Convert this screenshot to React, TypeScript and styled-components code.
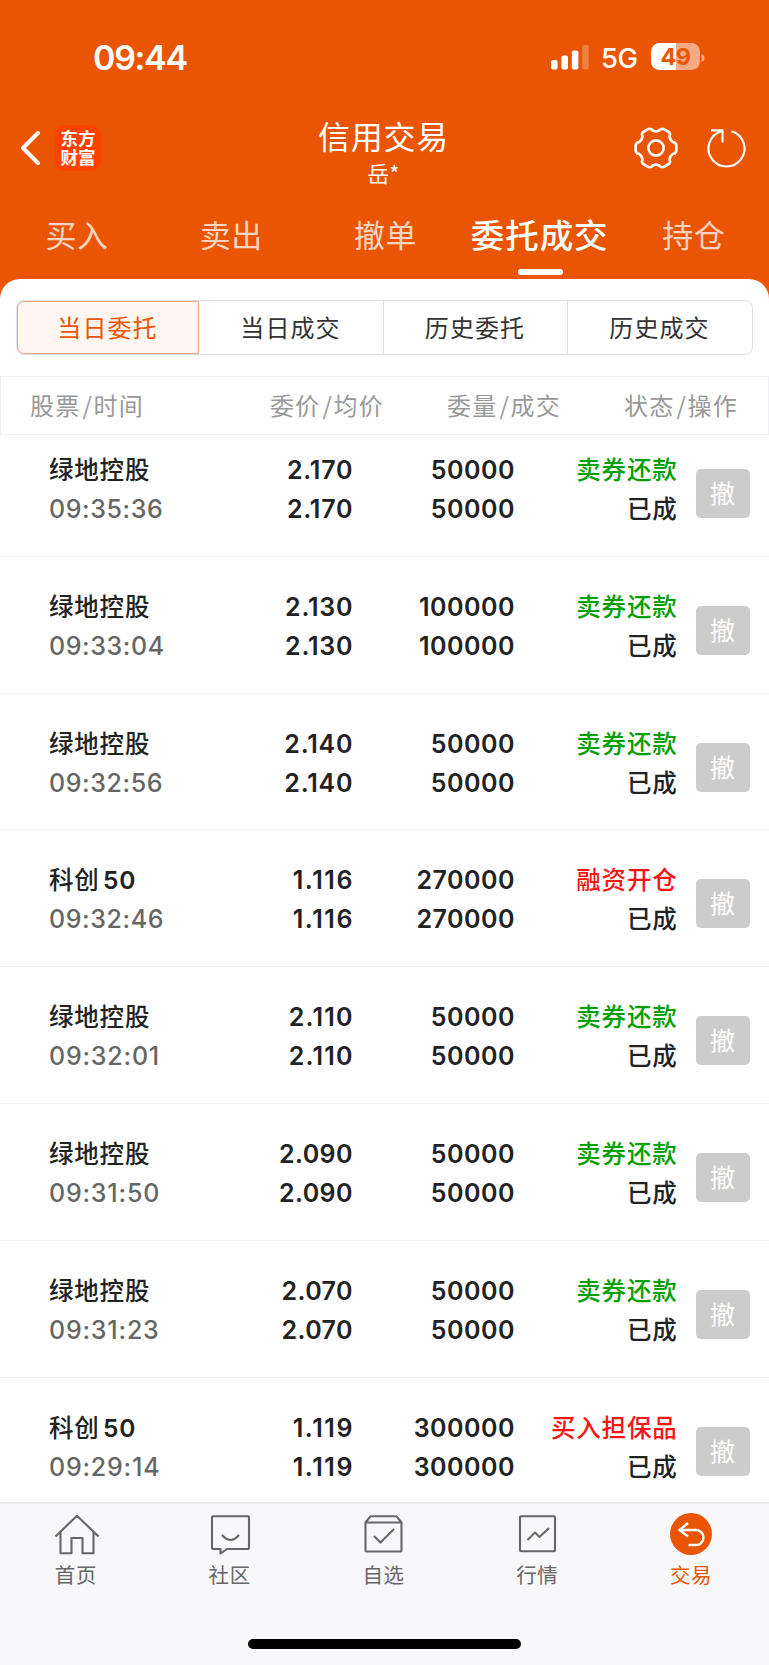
import React from "react";
import styled, { createGlobalStyle } from "styled-components";

const ORANGE = "#ea5504";
const FONT = `Inter, "Noto Sans CJK SC", sans-serif`;
const CJK = `"Noto Sans CJK SC", sans-serif`;

const Global = createGlobalStyle`
  * { box-sizing: border-box; }
  body { margin: 0; background: #fff; font-family: ${FONT}; }
`;

const Screen = styled.div`
  width: 769px;
  height: 1665px;
  display: flex;
  flex-direction: column;
  overflow: hidden;
  background: ${ORANGE};
`;

const StatusBar = styled.div`
  height: 115px;
  flex: none;
  display: flex;
  align-items: center;
  justify-content: space-between;
  padding: 0 64px 0 93px;
  color: #fff;
`;

const Clock = styled.span`
  font-size: 34px;
  font-weight: 600;
  letter-spacing: -1.3px;
`;

const Signals = styled.div`
  display: flex;
  align-items: center;
`;

const Network = styled.span`
  width: 62px;
  padding-left: 12px;
  font-size: 27.5px;
  font-weight: 500;
  letter-spacing: -0.6px;
`;

const Battery = styled.div`
  width: 49px;
  height: 27px;
  margin-top: -2px;
  border-radius: 8.5px;
  background: linear-gradient(90deg, #fff 50%, rgba(255, 255, 255, 0.5) 50%);
  color: ${ORANGE};
  font-size: 23.5px;
  font-weight: 700;
  line-height: 27px;
  letter-spacing: -0.6px;
  text-align: center;
`;

const NavBar = styled.div`
  height: 81px;
  flex: none;
  display: grid;
  grid-template-columns: 1fr 200px 1fr;
`;

const NavSide = styled.div<{ $end?: boolean }>`
  display: flex;
  align-items: center;
  justify-content: ${(p) => (p.$end ? "flex-end" : "flex-start")};
  padding: ${(p) => (p.$end ? "0 22px 16px 0" : "0 0 16px 19px")};
  gap: ${(p) => (p.$end ? "29.5px" : "12px")};
  color: #fff;
`;

const Logo = styled.div`
  width: 46px;
  height: 46px;
  border-radius: 10px;
  background: #ff4200;
  color: #fff;
  font: 700 17.5px/19.5px ${CJK};
  text-align: center;
  padding-top: 3px;
`;

const Heading = styled.div`
  text-align: center;
  color: #fff;
  font-family: ${CJK};
`;

const Title = styled.div`
  font-size: 32px;
  line-height: 39px;
  letter-spacing: 0.8px;
  padding: 1px 2px 0 0;
`;

const Account = styled.div`
  font-size: 22px;
  line-height: 34px;
  padding-right: 2px;
`;

const Tabs = styled.div`
  height: 83px;
  flex: none;
  display: grid;
  grid-template-columns: repeat(5, 154.2px);
`;

const Tab = styled.div<{ $active?: boolean }>`
  display: flex;
  flex-direction: column;
  align-items: center;
  white-space: nowrap;
  font-family: ${CJK};
  font-size: ${(p) => (p.$active ? 33.5 : 31)}px;
  font-weight: ${(p) => (p.$active ? 500 : 400)};
  letter-spacing: ${(p) => (p.$active ? 0.9 : 0.5)}px;
  line-height: 60px;
  padding-top: 8px;
  color: ${(p) => (p.$active ? "#fff" : "rgba(255,255,255,0.75)")};
`;

const Underline = styled.div`
  width: 45px;
  height: 6px;
  margin: 5px 0 0 1px;
  border-radius: 3px;
  background: #fff;
`;

const Sheet = styled.div`
  flex: 1;
  min-height: 0;
  display: flex;
  flex-direction: column;
  background: #fff;
  border-radius: 20px 20px 0 0;
  padding-top: 21px;
`;

const Segments = styled.div`
  height: 55px;
  flex: none;
  margin: 0 16px 21px;
  display: grid;
  grid-template-columns: 182px 184px 184px 1fr;
  border: 1px solid #dcdfe6;
  border-radius: 8px;
`;

const Segment = styled.div<{ $active?: boolean }>`
  display: flex;
  align-items: center;
  justify-content: center;
  padding: 0 1px 2px 0;
  font-family: ${CJK};
  font-size: 24px;
  letter-spacing: 1.1px;
  color: ${(p) => (p.$active ? ORANGE : "#333")};
  background: ${(p) => (p.$active ? "#fff5f1" : "transparent")};
  border: ${(p) => (p.$active ? "1px solid #f5a784" : "0")};
  border-radius: ${(p) => (p.$active ? "7px 0 0 7px" : "0")};
  & + &:not(:nth-child(2)) { border-left: 1px solid #dcdfe6; }
`;

const TableHead = styled.div`
  height: 59px;
  flex: none;
  display: flex;
  align-items: center;
  border: 1px solid #f0f0f2;
  padding: 0 30px 2px 29px;
  font: 400 24px ${CJK};
  letter-spacing: 1.2px;
  color: #999;
`;

const HeadCell = styled.div<{ $w?: number }>`
  ${(p) => (p.$w ? `width: ${p.$w}px; text-align: right;` : "flex: 1;")}
  white-space: nowrap;
`;

const Slash = styled.span`
  padding: 0 0.5px 0 2px;
`;

const List = styled.div`
  flex: 1;
  min-height: 0;
  overflow: hidden;
`;

const Rows = styled.div`
  margin-top: -15px;
`;

const Row = styled.div`
  height: 136.83px;
  display: grid;
  grid-template-columns: 1fr 150px 162px 162px 92.5px;
  padding: 31px 0 0 49px;
  border-bottom: 1px solid #f2f2f4;
  color: #222;
`;

const Cell = styled.div<{ $end?: boolean }>`
  display: flex;
  flex-direction: column;
  align-items: ${(p) => (p.$end ? "flex-end" : "flex-start")};
  white-space: nowrap;
`;

const Num = styled.span<{ $muted?: boolean; $track: number }>`
  font-size: 25px;
  font-weight: ${(p) => (p.$muted ? 550 : 600)};
  line-height: 39px;
  letter-spacing: ${(p) => p.$track}px;
  margin-right: ${(p) => -p.$track}px;
  color: ${(p) => (p.$muted ? "#666" : "inherit")};
`;

const Label = styled.span<{ $color?: string }>`
  font-family: ${FONT};
  font-size: 24.5px;
  font-weight: 500;
  line-height: 39px;
  letter-spacing: 0.8px;
  margin-right: -1px;
  color: ${(p) => p.$color ?? "#222"};
`;

const Suffix = styled.span`
  margin-left: 3.5px;
  font-weight: 600;
`;

const CancelButton = styled.button`
  width: 54px;
  height: 49px;
  margin: 18px 0 0 19px;
  padding: 0 0 3px;
  border: 0;
  border-radius: 5px;
  background: #ccc;
  color: #fff;
  font: 400 25px ${CJK};
`;

const TabBar = styled.div`
  height: 163px;
  flex: none;
  background: #f8f8fb;
  border-top: 2px solid #ebebed;
  display: flex;
  flex-direction: column;
  align-items: center;
  justify-content: space-between;
  padding-bottom: 16px;
`;

const TabItems = styled.div`
  width: 100%;
  display: grid;
  grid-template-columns: repeat(5, 1fr);
`;

const TabItem = styled.div<{ $active?: boolean }>`
  display: flex;
  flex-direction: column;
  align-items: center;
  padding-top: 6px;
  color: ${(p) => (p.$active ? ORANGE : "#666")};
`;

const TabName = styled.span`
  font: 400 20.5px/32px ${CJK};
  letter-spacing: 0.6px;
  padding-right: 2px;
`;

const HomeIndicator = styled.div`
  width: 273px;
  height: 10px;
  border-radius: 5px;
  background: #000;
`;

const Stroke = styled.svg`
  display: block;
  flex: none;
  fill: none;
  stroke: currentColor;
  stroke-linejoin: round;
`;

const orders = [
  ["绿地控股", "", "09:35:36", "2.170", "50000", "卖券还款"],
  ["绿地控股", "", "09:33:04", "2.130", "100000", "卖券还款"],
  ["绿地控股", "", "09:32:56", "2.140", "50000", "卖券还款"],
  ["科创", "50", "09:32:46", "1.116", "270000", "融资开仓"],
  ["绿地控股", "", "09:32:01", "2.110", "50000", "卖券还款"],
  ["绿地控股", "", "09:31:50", "2.090", "50000", "卖券还款"],
  ["绿地控股", "", "09:31:23", "2.070", "50000", "卖券还款"],
  ["科创", "50", "09:29:14", "1.119", "300000", "买入担保品"],
];

const heads: [string, string, number?][] = [
  ["股票", "时间"],
  ["委价", "均价", 150],
  ["委量", "成交", 177],
  ["状态", "操作", 177],
];

// The digit 1 is narrow, so figures that contain it are tracked a little wider.
const track = (value: string, base: number, perOne: number) =>
  base + perOne * (value.split("1").length - 1);

const GearIcon = () => {
  const d = Array.from({ length: 6 }, (_, i) => {
    const at = (r: number, deg: number) => {
      const a = ((i * 60 + deg) * Math.PI) / 180;
      return `${(22 + r * Math.cos(a)).toFixed(2)} ${(22 + r * Math.sin(a)).toFixed(2)}`;
    };
    return `${i ? "L" : "M"}${at(20.5, -10)} Q${at(20.6, 0)} ${at(20.5, 10)} L${at(19.6, 16)} Q${at(18, 18)} ${at(17.6, 21)} Q${at(16, 30)} ${at(17.6, 39)} Q${at(18, 42)} ${at(19.6, 44)}`;
  }).join(" ");
  return (
    <Stroke width="44" height="44" viewBox="0 0 44 44" strokeWidth="2.7">
      <path d={d + "Z"} />
      <circle cx="22" cy="22" r="7.6" />
    </Stroke>
  );
};

const tabIcons = [
  <path key="h" d="M2.5 23.5 24 2.8 45.5 23.5M7.5 19.5V40.3H18.5V25H29.5V40.3H40.5V19.5" />,
  <g key="c"><path d="M6 3.3H41Q42 3.3 42 4.3V35Q42 36 41 36H20L13.5 40.5V36H6Q5 36 5 35V4.3Q5 3.3 6 3.3Z" /><path d="M15 22Q23.5 32 32 22" /></g>,
  <g key="s"><path d="M5.5 9.5 10.5 3.3H36.5L41.5 9.5V37.3Q41.5 38.5 40.5 38.5H6.5Q5.5 38.5 5.5 37.3ZM5.5 9.5H41.5" /><path d="M14 23 20.5 29.5 34 16" /></g>,
  <g key="m"><rect x="6" y="3.3" width="35" height="35" rx="1" /><path d="M13.5 27 21 19.5 25.5 24 35 15" /></g>,
  <g key="t"><circle cx="23" cy="21" r="21" fill={ORANGE} stroke="none" /><path stroke="#fff" strokeWidth="2.4" d="M20 10 11.5 17 20 23.5M12 17H28A7.5 7.5 0 0 1 28 32H20.5" /></g>,
];
const tabLabels = ["首页", "社区", "自选", "行情", "交易"];

export default function App() {
  return (
    <Screen>
      <Global />
      <StatusBar>
        <Clock>09:44</Clock>
        <Signals>
          <svg width="38" height="25" viewBox="0 0 38 25" fill="#fff">
            <rect x="0" y="15" width="6.6" height="9.4" rx="2" />
            <rect x="10.4" y="10.5" width="6.6" height="13.9" rx="2" />
            <rect x="20.8" y="5.5" width="6.6" height="18.9" rx="2" />
            <rect x="31.2" y="0" width="6.6" height="24.4" rx="2" opacity=".25" />
          </svg>
          <Network>5G</Network>
          <Battery>49</Battery>
          <svg width="5" height="10" viewBox="0 0 5 10" fill="#fff" opacity=".5">
            <path d="M1.5 1Q4.5 2 4.5 5T1.5 9Z" />
          </svg>
        </Signals>
      </StatusBar>
      <NavBar>
        <NavSide>
          <Stroke width="24" height="36" viewBox="0 0 24 36" strokeWidth="4" strokeLinecap="round">
            <path d="M19 3 4 18 19 33" />
          </Stroke>
          <Logo>东方<br />财富</Logo>
        </NavSide>
        <Heading>
          <Title>信用交易</Title>
          <Account>岳*</Account>
        </Heading>
        <NavSide $end>
          <GearIcon />
          <Stroke width="40" height="40" viewBox="0 0 40 40" strokeWidth="2.1">
            <path d="M24.5 3.2A18 18 0 1 1 14.5 3.2M4 2.4H15.5V14.5" />
          </Stroke>
        </NavSide>
      </NavBar>
      <Tabs>
        {["买入", "卖出", "撤单", "委托成交", "持仓"].map((t, i) => (
          <Tab key={t} $active={i === 3}>
            {t}
            {i === 3 && <Underline />}
          </Tab>
        ))}
      </Tabs>
      <Sheet>
        <Segments>
          {["当日委托", "当日成交", "历史委托", "历史成交"].map((t, i) => (
            <Segment key={t} $active={i === 0}>{t}</Segment>
          ))}
        </Segments>
        <TableHead>
          {heads.map(([a, b, w]) => (
            <HeadCell key={a} $w={w}>{a}<Slash>/</Slash>{b}</HeadCell>
          ))}
        </TableHead>
        <List>
          <Rows>
            {orders.map(([name, suffix, time, price, qty, kind]) => (
              <Row key={time}>
                <Cell>
                  <Label>{name}{suffix && <Suffix>{suffix}</Suffix>}</Label>
                  <Num $muted $track={track(time, 0.6, 0.2)}>{time}</Num>
                </Cell>
                <Cell $end>
                  <Num $track={track(price, 0.4, 0.4)}>{price}</Num>
                  <Num $track={track(price, 0.4, 0.4)}>{price}</Num>
                </Cell>
                <Cell $end>
                  <Num $track={0.5}>{qty}</Num>
                  <Num $track={0.5}>{qty}</Num>
                </Cell>
                <Cell $end>
                  <Label $color={kind === "卖券还款" ? "#00a000" : "#fa1414"}>{kind}</Label>
                  <Label>已成</Label>
                </Cell>
                <CancelButton>撤</CancelButton>
              </Row>
            ))}
          </Rows>
        </List>
      </Sheet>
      <TabBar>
        <TabItems>
          {tabLabels.map((t, i) => (
            <TabItem key={t} $active={i === 4}>
              <Stroke width="48" height="48" viewBox="0 -3 48 48" strokeWidth="2.1">{tabIcons[i]}</Stroke>
              <TabName>{t}</TabName>
            </TabItem>
          ))}
        </TabItems>
        <HomeIndicator />
      </TabBar>
    </Screen>
  );
}
